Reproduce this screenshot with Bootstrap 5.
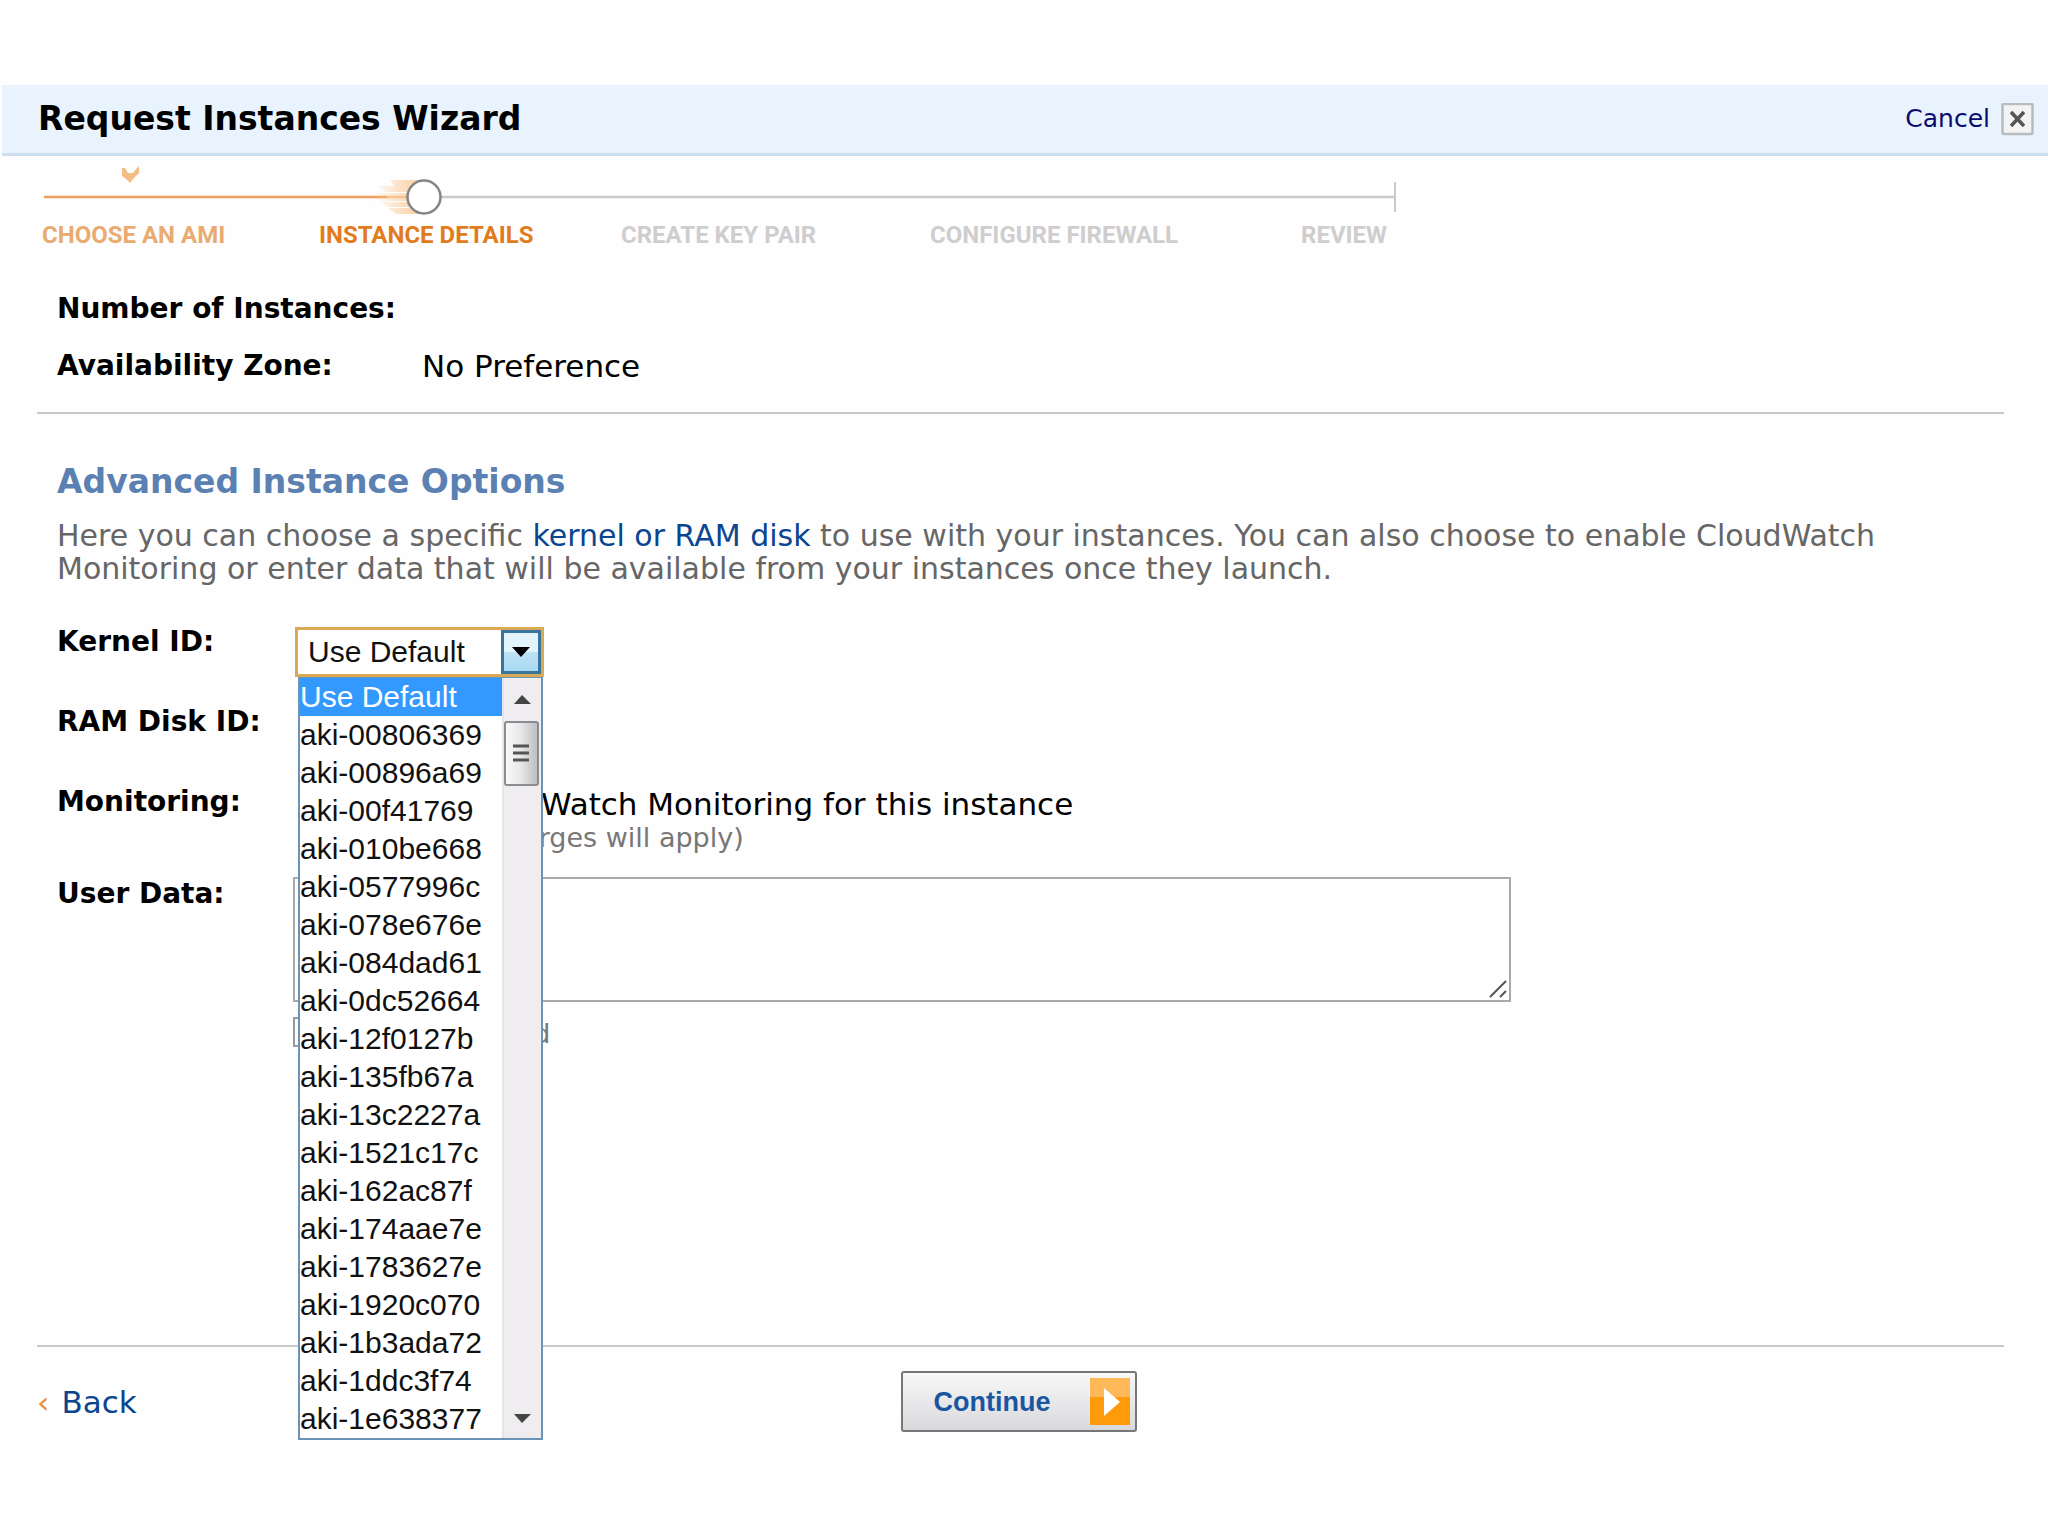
<!DOCTYPE html>
<html lang="en">
<head>
<meta charset="utf-8">
<meta name="viewport" content="width=device-width, initial-scale=1">
<title>Request Instances Wizard</title>
<link href="https://cdn.jsdelivr.net/npm/bootstrap@5.3.0/dist/css/bootstrap.min.css" rel="stylesheet">
<style>
  body { background: #fefefe; color: #000; font: 31px/34px "DejaVu Sans", Verdana, sans-serif; }
  a { color: #0b4590; text-decoration: none; }
  .wizard { padding: 85px 0 0 2px; }
  .wizard-head { background: #e9f3fe; border-bottom: 3px solid #cbdff0; height: 71px; padding: 0 14px 0 36px; }
  .wizard-title { font-size: 33px; line-height: 40px; }
  .cancel-link { color: #0a0a6e; font-size: 25px; gap: 11px; }
  .steps-track { display: block; width: 1360px; height: 62px; }
  .steps { padding: 0 40px; height: 106px; }
  .steps-list { grid-template-columns: 277px 302px 309px 371px auto; justify-content: start; font: bold 24px/34px Roboto, "Liberation Sans", sans-serif; color: #cfcdcd; }
  .step-done { color: #e9ab70; }
  .step-now { color: #e27b1c; }
  .wizard-body { margin: 0 44px 0 35px; }
  .rule { height: 2px; background: #c9c9c9; }
  .inset { padding-left: 20px; }
  .summary { grid-template-columns: 365px 1fr; row-gap: 23px; padding-top: 30px; padding-bottom: 29px; }
  .form-name { font-size: 28px; font-weight: bold; }
  .section-title { color: #5b80b2; font-size: 33px; line-height: 40px; padding-top: 48px; margin-bottom: 17px; }
  .intro { color: #666; font-size: 30px; line-height: 33px; margin-bottom: 40px; }
  .fields { grid-template-columns: 236px 1fr; min-height: 720px; align-content: start; }
  .field-line { min-height: 80px; }
  .picker { width: 249px; z-index: 2; margin: 2px 0 0 2px; }
  .picker-box { height: 50px; border: 3px solid #d9a956; background: #fff; }
  .picker select { appearance: none; border: 0; background: transparent; color: #111; width: 100%; padding: 0 0 0 10px; font: 30px/44px "Liberation Sans", Arial, sans-serif; }
  .picker-arrow { top: 0; right: 0; width: 40px; height: 44px; border: 3px solid #38749b; background: linear-gradient(#e3f4fc 50%, #bfe3f6 50%, #a9d9f2); pointer-events: none; }
  .picker-menu { top: 50px; left: 3px; width: 245px; border: 2px solid #6b93b8; border-top-width: 1px; background: #fff; font: 30px/38px "Liberation Sans", Arial, sans-serif; color: #111; }
  .picker-menu .picked { background: #3399ff; color: #fff; }
  .scroller { width: 39px; background: #efedf0; border-left: 2px solid #e6e4e7; }
  .plain-select { width: 240px; height: 44px; margin-left: 6px; font: 30px/40px "Liberation Sans", Arial, sans-serif; }
  .tick { width: 30px; height: 30px; appearance: none; border: 2px solid #999; background: #fff; flex: none; }
  .monitor-cell { min-height: 92px; margin-left: 6px; padding-top: 2px; gap: 8px; }
  .note { color: #777; font-size: 27px; line-height: 34px; gap: 4px; }
  .encoded { margin-top: 15px; }
  .user-data { display: block; width: 100%; height: 125px; border: 2px solid #a9a9a9; background: #fff; resize: none; }
  .user-data-box { max-width: 1218px; }
  .grip { right: 4px; bottom: 4px; pointer-events: none; }
  .wizard-foot { grid-template-columns: 1fr auto 1fr; padding: 24px 4px 100px 0; }
  .back-link { gap: 12px; }
  .back-mark { color: #e8913a; }
  .go-btn { width: 236px; height: 61px; border: 2px solid #777; border-radius: 3px; background: linear-gradient(#f8f8f8, #d9d8dc); color: #1a55a0; font: bold 27px/32px "Liberation Sans", Arial, sans-serif; padding: 0 5px 0 31px; }
</style>
<script src="https://cdn.jsdelivr.net/npm/bootstrap@5.3.0/dist/js/bootstrap.bundle.min.js"></script>
</head>
<body>
<main class="wizard min-vh-100">
  <header class="wizard-head d-flex align-items-center justify-content-between">
    <h1 class="wizard-title fw-bold m-0">Request Instances Wizard</h1>
    <a href="#" class="cancel-link d-flex align-items-center">Cancel
      <svg width="33" height="33" viewBox="0 0 33 33" aria-hidden="true"><rect x="1.500" y="1" width="30" height="30" rx="1" fill="#f3f3f3" stroke="#b9bcbc" stroke-width="2.500"/><path d="M10 9L23 23M23 9L10 23" stroke="#555" stroke-width="3.500"/></svg>
    </a>
  </header>

  <nav class="steps" aria-label="Progress">
    <svg class="steps-track" viewBox="0 0 1360 62" aria-hidden="true">
      <defs><linearGradient id="trail"><stop offset="0" stop-color="#f9c995" stop-opacity="0"/><stop offset="1" stop-color="#f9c58c" stop-opacity=".85"/></linearGradient></defs>
      <path d="M80 12l3 0 3 5 5 0 3-4 3-3v7l-5 5-4 5-4-4-4-3z" fill="#f3bd88"/>
      <path d="M2 41H345" stroke="#ee9f5c" stroke-width="2.500"/>
      <path d="M345 41H370" stroke="#f6bf8c" stroke-width="2.500"/>
      <path d="M348 24h28v6h-24zM336 30h38v6h-30zM328 37h42v8h-42zM338 46h34v5h-26zM346 52h32v6h-24z" fill="url(#trail)"/>
      <path d="M398 41H1353" stroke="#cbc9c9" stroke-width="2.500"/>
      <path d="M1353 26V56" stroke="#cbc9c9" stroke-width="2"/>
      <circle cx="382" cy="41" r="16.500" fill="#fff" stroke="#858585" stroke-width="2.500"/>
    </svg>
    <div class="steps-list d-grid">
      <span class="step-done">CHOOSE AN AMI</span>
      <span class="step-now" aria-current="step">INSTANCE DETAILS</span>
      <span>CREATE KEY PAIR</span>
      <span>CONFIGURE FIREWALL</span>
      <span>REVIEW</span>
    </div>
  </nav>

  <form class="wizard-body">
    <div class="summary d-grid inset">
      <span class="form-name">Number of Instances:</span><span></span>
      <span class="form-name">Availability Zone:</span><span>No Preference</span>
    </div>
    <div class="rule"></div>

    <section class="inset">
      <h2 class="section-title fw-bold mt-0">Advanced Instance Options</h2>
      <p class="intro">Here you can choose a specific <a href="#">kernel or RAM disk</a> to use with your instances. You can also choose to enable CloudWatch<br>Monitoring or enter data that will be available from your instances once they launch.</p>

      <div class="fields d-grid">
        <label class="form-name field-line" for="kernel">Kernel ID:</label>
        <div>
          <div class="picker position-relative">
            <div class="picker-box position-relative">
              <select id="kernel"><option>Use Default</option></select>
              <span class="picker-arrow position-absolute d-flex align-items-center justify-content-center"><svg width="18" height="10" viewBox="0 0 18 10" aria-hidden="true"><path d="M0 0H18L9 10z" fill="#000"/></svg></span>
            </div>
            <div class="picker-menu position-absolute d-flex">
              <ul class="list-unstyled m-0 flex-grow-1" role="listbox" aria-label="Kernel ID">
                <li class="picked" role="option" aria-selected="true">Use Default</li>
                <li role="option">aki-00806369</li>
                <li role="option">aki-00896a69</li>
                <li role="option">aki-00f41769</li>
                <li role="option">aki-010be668</li>
                <li role="option">aki-0577996c</li>
                <li role="option">aki-078e676e</li>
                <li role="option">aki-084dad61</li>
                <li role="option">aki-0dc52664</li>
                <li role="option">aki-12f0127b</li>
                <li role="option">aki-135fb67a</li>
                <li role="option">aki-13c2227a</li>
                <li role="option">aki-1521c17c</li>
                <li role="option">aki-162ac87f</li>
                <li role="option">aki-174aae7e</li>
                <li role="option">aki-1783627e</li>
                <li role="option">aki-1920c070</li>
                <li role="option">aki-1b3ada72</li>
                <li role="option">aki-1ddc3f74</li>
                <li role="option">aki-1e638377</li>
              </ul>
              <div class="scroller d-flex flex-column justify-content-between" aria-hidden="true">
                <svg width="37" height="112" viewBox="0 0 37 112">
                  <defs><linearGradient id="thumb"><stop offset="0" stop-color="#fafafa"/><stop offset=".5" stop-color="#e6e6e8"/><stop offset="1" stop-color="#bcbcc0"/></linearGradient></defs>
                  <path d="M10 26L18 17L27 26z" fill="#444"/>
                  <rect x="1" y="44" width="33" height="63" rx="2" fill="url(#thumb)" stroke="#8c8c90" stroke-width="2"/>
                  <path d="M9 68H25M9 75H25M9 82H25" stroke="#555" stroke-width="3"/>
                </svg>
                <svg width="37" height="30" viewBox="0 0 37 30"><path d="M10 6H27L18 15z" fill="#444"/></svg>
              </div>
            </div>
          </div>
        </div>

        <label class="form-name field-line" for="ramdisk">RAM Disk ID:</label>
        <div><select id="ramdisk" class="plain-select"><option>Use Default</option></select></div>

        <label class="form-name" for="monitoring">Monitoring:</label>
        <div class="monitor-cell d-flex">
          <input class="tick" type="checkbox" id="monitoring">
          <div>
            <div>Enable CloudWatch Monitoring for this instance</div>
            <div class="note">(additional charges will apply)</div>
          </div>
        </div>

        <label class="form-name" for="userdata">User Data:</label>
        <div>
          <div class="user-data-box position-relative">
            <textarea id="userdata" class="user-data"></textarea>
            <svg class="grip position-absolute" width="18" height="18" viewBox="0 0 18 18" aria-hidden="true"><path d="M1 17L17 1M11 17L17 11" stroke="#555" stroke-width="2"/></svg>
          </div>
          <label class="note encoded d-flex"><input class="tick" type="checkbox">base64 encoded</label>
        </div>
      </div>
    </section>

    <div class="rule"></div>
    <footer class="wizard-foot d-grid align-items-center">
      <a href="#" class="back-link d-flex"><span class="back-mark">‹</span>Back</a>
      <button type="button" class="go-btn d-flex align-items-center justify-content-between">Continue
        <svg width="40" height="47" viewBox="0 0 40 47" aria-hidden="true"><path d="M0 0H40V47H0z" fill="#ff9a0a"/><path d="M0 0H40V19H0z" fill="#ffb858"/><path d="M14 10L30 24L14 38z" fill="#fff"/></svg>
      </button>
    </footer>
  </form>
</main>
</body>
</html>
